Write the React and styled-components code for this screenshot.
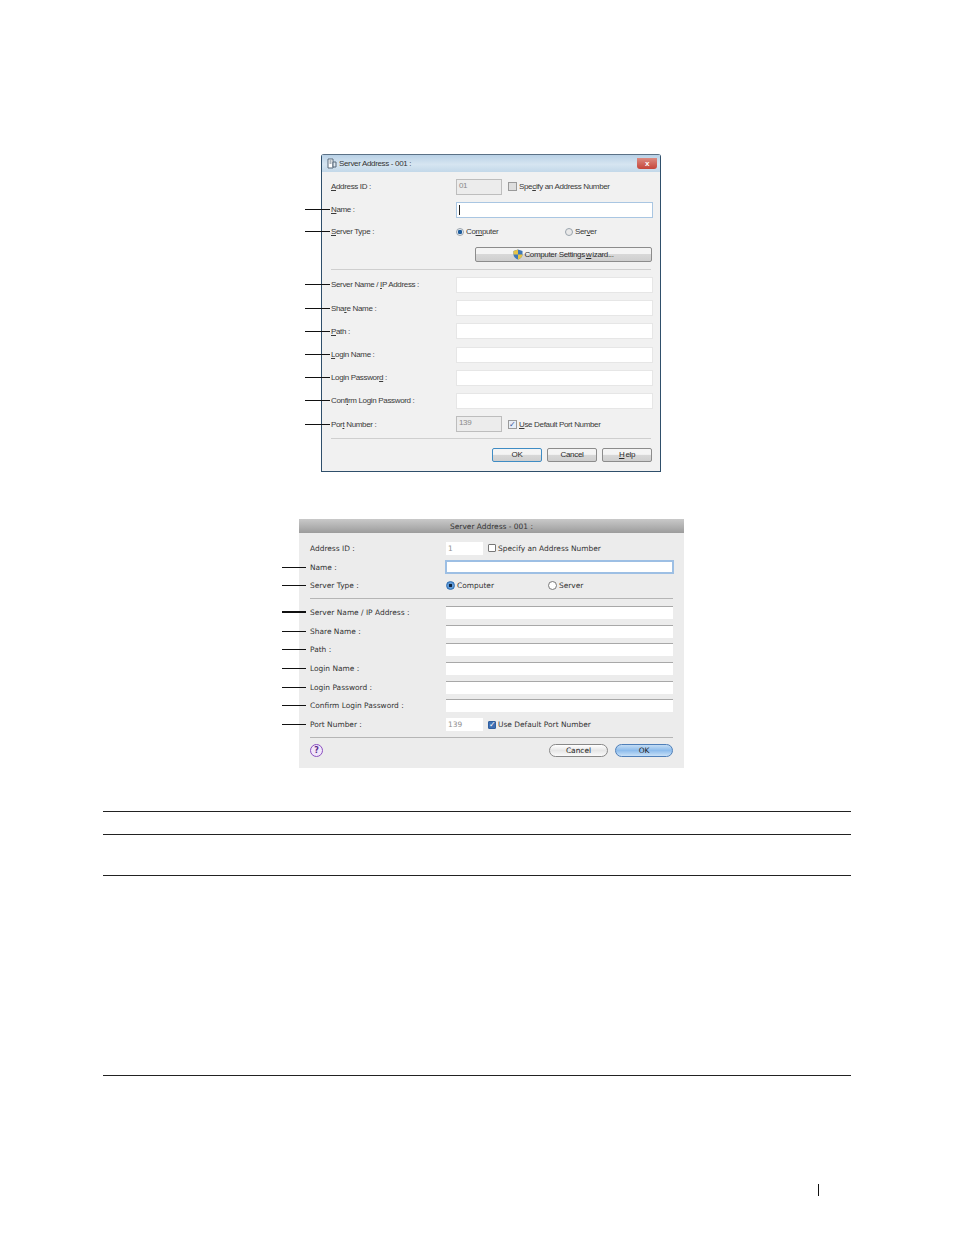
import React from 'react';
import styled, { createGlobalStyle } from 'styled-components';

const Global = createGlobalStyle`
  html, body { margin: 0; padding: 0; background: #fff; }
`;

const Page = styled.div`
  width: 954px;
  height: 1235px;
  padding-top: 154px;
  box-sizing: border-box;
  overflow: hidden;
  background: #fff;
`;

/* ---------- windows dialog ---------- */
const WinDialog = styled.section`
  width: 340px;
  height: 318px;
  margin-left: 321px;
  box-sizing: border-box;
  border: 1px solid #2f4f6b;
  border-top-color: #5b7186;
  border-radius: 3px 3px 0 0;
  background: #f1f1f1;
  font: 8px "Liberation Sans", sans-serif;
  letter-spacing: -0.34px;
  color: #3a3a3a;
  display: flex;
  flex-direction: column;
`;

const WinTitle = styled.header`
  height: 17px;
  flex: none;
  display: flex;
  align-items: center;
  gap: 2px;
  padding: 0 3px 0 5px;
  background: linear-gradient(#b9d1e6, #d6e5f1 55%, #c3d8e9);
  color: #333;
`;

const WinClose = styled.span`
  margin-left: auto;
  width: 20px;
  height: 11px;
  border-radius: 0 0 3px 3px;
  background: linear-gradient(#dc8a80, #c5453a);
  color: #fff;
  font-size: 8px;
  font-weight: bold;
  display: flex;
  align-items: center;
  justify-content: center;
`;

const WinBody = styled.div`
  flex: 1;
  padding: 3px 8px 0 9px;
  display: flex;
  flex-direction: column;
`;

const WinRow = styled.div`
  height: ${p => p.$h || 23.2}px;
  flex: none;
  display: flex;
  align-items: center;
`;

const WinLabel = styled.span`
  position: relative;
  width: 125px;
  flex: none;
  &::before {
    content: ${p => (p.$lead ? '""' : 'none')};
    position: absolute;
    left: -26px;
    top: 4px;
    width: 25px;
    height: 1px;
    background: #111;
  }
`;

const WinInput = styled.div`
  box-sizing: border-box;
  width: ${p => p.$w || 197}px;
  height: 16px;
  flex: none;
  padding-left: 2px;
  line-height: 11px;
  color: #8a8a8a;
  background: ${p => (p.$off ? '#ececec' : '#fff')};
  border: 1px solid ${p => (p.$off ? '#bdbdbd' : p.$focus ? '#a9c6e2' : '#e6e6e6')};
`;

const Caret = styled.span`
  display: block;
  width: 1px;
  height: 10px;
  margin-top: 2px;
  background: #222;
`;

const WinCheck = styled.span`
  box-sizing: border-box;
  width: 9px;
  height: 9px;
  flex: none;
  margin: 0 2px 0 6px;
  border: 1px solid #9a9a9a;
  background: ${p => (p.$on ? '#e8eef6' : '#dedede')};
  color: #39559c;
  font-size: 8px;
  line-height: 7px;
  text-align: center;
`;

const WinRadio = styled.span`
  box-sizing: border-box;
  width: 8px;
  height: 8px;
  flex: none;
  margin-right: 2px;
  border-radius: 50%;
  border: 1px solid #9aa4ad;
  background: ${p => (p.$on ? 'radial-gradient(circle, #1d5c9c 0 2px, #e8eef4 2.4px)' : '#e9e9e9')};
`;

const RadioCell = styled.span`
  width: ${p => p.$w}px;
  flex: none;
  display: flex;
  align-items: center;
`;

const WizardRow = styled.div`
  height: 27px;
  flex: none;
  display: flex;
  justify-content: flex-end;
  align-items: center;
  padding-bottom: 2px;
  box-sizing: border-box;
`;

const WinButton = styled.button`
  box-sizing: border-box;
  width: ${p => p.$w || 50}px;
  height: ${p => p.$h || 14}px;
  padding: 0;
  display: flex;
  align-items: center;
  justify-content: center;
  gap: 1px;
  font: inherit;
  letter-spacing: inherit;
  color: #2c2c2c;
  border-radius: 2px;
  border: 1px solid ${p => (p.$main ? '#3f8cc4' : '#8c8c8c')};
  background: linear-gradient(#f4f4f4 45%, #d8d8d8 50%, #cfcfcf);
`;

const WinRule = styled.hr`
  width: 320px;
  height: 1px;
  flex: none;
  margin: ${p => p.$m};
  border: 0;
  background: #cfcfcf;
`;

const WinFooter = styled.div`
  display: flex;
  justify-content: flex-end;
  gap: 5px;
  margin-top: 9px;
`;

/* ---------- mac dialog ---------- */
const MacDialog = styled.section`
  width: 385px;
  height: 249px;
  margin: 47px 0 0 299px;
  background: #ececec;
  font: 7.45px "DejaVu Sans", sans-serif;
  color: #333;
  display: flex;
  flex-direction: column;
`;

const MacTitle = styled.header`
  height: 14px;
  flex: none;
  background: linear-gradient(#c9c9c9, #9c9c9c);
  display: flex;
  align-items: center;
  justify-content: center;
`;

const MacBody = styled.div`
  flex: 1;
  padding: 6px 11px 0 11px;
  display: flex;
  flex-direction: column;
`;

const MacRow = styled.div`
  height: 18.7px;
  flex: none;
  display: flex;
  align-items: center;
`;

const MacLabel = styled.span`
  position: relative;
  width: 136px;
  flex: none;
  &::before {
    content: ${p => (p.$lead ? '""' : 'none')};
    position: absolute;
    left: -28px;
    top: ${p => (p.$bold ? 3 : 4)}px;
    width: 24px;
    height: ${p => (p.$bold ? 2 : 1)}px;
    background: #111;
  }
`;

const MacInput = styled.div`
  box-sizing: border-box;
  width: ${p => p.$w || 227}px;
  height: ${p => (p.$focus ? 12 : 13)}px;
  flex: none;
  padding-left: 2px;
  line-height: 12px;
  color: #8f8f8f;
  background: #fff;
  border-top: 1px solid ${p => (p.$plain ? '#fff' : '#a8a8a8')};
  ${p => p.$focus && 'outline: 2px solid #9dbfe4; outline-offset: -1px; border: 1px solid #6f9bcd;'}
`;

const MacCheck = styled.span`
  box-sizing: border-box;
  width: 8px;
  height: 8px;
  flex: none;
  margin: 0 2px 0 5px;
  border-radius: 1px;
  border: 1px solid ${p => (p.$on ? '#2f5f9f' : '#777')};
  background: ${p => (p.$on ? '#3f6fb3' : '#fff')};
  color: #fff;
  font-size: 8px;
  line-height: 6px;
  text-align: center;
`;

const MacRadio = styled.span`
  box-sizing: border-box;
  width: 9px;
  height: 9px;
  flex: none;
  margin-right: 2px;
  border-radius: 50%;
  border: 1px solid ${p => (p.$on ? '#2a6bb0' : '#777')};
  background: ${p => (p.$on ? 'radial-gradient(circle, #10253f 0 1.4px, #5f9ad8 1.9px)' : '#fff')};
`;

const MacRule = styled.hr`
  width: 363px;
  height: 1px;
  flex: none;
  margin: ${p => p.$m};
  border: 0;
  background: #b5b5b5;
`;

const MacFooter = styled.div`
  display: flex;
  align-items: center;
  margin-top: 6px;
`;

const MacButton = styled.button`
  box-sizing: border-box;
  width: ${p => p.$w}px;
  height: 13px;
  margin-left: ${p => p.$ml || 0}px;
  padding: 0;
  font: inherit;
  color: #222;
  border-radius: 7px;
  border: 1px solid ${p => (p.$main ? '#4f7fb8' : '#888')};
  background: ${p => (p.$main ? 'linear-gradient(#c3dcf4, #8dbcec 50%, #c8e0f7)' : 'linear-gradient(#fff, #e6e6e6 50%, #fafafa)')};
`;

const HelpDot = styled.span`
  box-sizing: border-box;
  width: 13px;
  height: 13px;
  border-radius: 50%;
  border: 1px solid #8a4fc0;
  background: #f1e6fa;
  color: #5a2d8c;
  font-size: 8px;
  font-weight: bold;
  line-height: 11px;
  text-align: center;
`;

/* ---------- table + footer ---------- */
const Table = styled.div`
  width: 748px;
  margin: 43px 0 0 103px;
  border-bottom: 1px solid #222;
`;

const TableRow = styled.div`
  height: ${p => p.$h}px;
  box-sizing: border-box;
  border-top: 1px solid #222;
`;

const PageMark = styled.div`
  width: 1px;
  height: 12px;
  margin: 108px 0 0 818px;
  background: #111;
`;

const AppIcon = () => (
  <svg width="10" height="11" viewBox="0 0 10 11">
    <path d="M1 1h5v9H1z" fill="#fff" stroke="#56697a" strokeWidth="1" />
    <path d="M6 4h3v5H6z" fill="#dfe8f0" stroke="#56697a" strokeWidth="1" />
    <path d="M2.5 3h2M2.5 5h2" stroke="#56697a" strokeWidth="1" />
  </svg>
);

const Shield = () => (
  <svg width="10" height="11" viewBox="0 0 10 11">
    <path d="M5 0.5 9.5 2v3.5C9.5 8 7.5 9.6 5 10.5 2.5 9.6.5 8 .5 5.5V2z" fill="#3f78b8" />
    <path d="M5 .5V5.5H.5V2zM5 5.5H9.5C9.5 8 7.5 9.6 5 10.5z" fill="#e6c347" />
  </svg>
);

const winFields = [
  <>Server Name / <u>I</u>P Address :</>,
  <>Sha<u>r</u>e Name :</>,
  <><u>P</u>ath :</>,
  <><u>L</u>ogin Name :</>,
  <>Login Passwor<u>d</u> :</>,
  <>Conf<u>i</u>rm Login Password :</>,
];

const macFields = ['Share Name :', 'Path :', 'Login Name :', 'Login Password :', 'Confirm Login Password :'];

const App = () => {
  return (
    <Page>
      <Global />
      <WinDialog>
        <WinTitle>
          <AppIcon />
          Server Address - 001 :
          <WinClose>x</WinClose>
        </WinTitle>
        <WinBody>
          <WinRow>
            <WinLabel><u>A</u>ddress ID :</WinLabel>
            <WinInput $off $w={46}>01</WinInput>
            <WinCheck />
            <span>Spe<u>c</u>ify an Address Number</span>
          </WinRow>
          <WinRow>
            <WinLabel $lead><u>N</u>ame :</WinLabel>
            <WinInput $focus><Caret /></WinInput>
          </WinRow>
          <WinRow $h={21}>
            <WinLabel $lead><u>S</u>erver Type :</WinLabel>
            <RadioCell $w={109}><WinRadio $on />Co<u>m</u>puter</RadioCell>
            <RadioCell $w={60}><WinRadio />Ser<u>v</u>er</RadioCell>
          </WinRow>
          <WizardRow>
            <WinButton $w={177} $h={15}><Shield />Computer Settings <u>w</u>izard...</WinButton>
          </WizardRow>
          <WinRule $m="0 0 3px" />
          {winFields.map((label, i) => (
            <WinRow key={i}>
              <WinLabel $lead>{label}</WinLabel>
              <WinInput />
            </WinRow>
          ))}
          <WinRow>
            <WinLabel $lead>Por<u>t</u> Number :</WinLabel>
            <WinInput $off $w={46}>139</WinInput>
            <WinCheck $on>✓</WinCheck>
            <span><u>U</u>se Default Port Number</span>
          </WinRow>
          <WinRule $m="2px 0 0" />
          <WinFooter>
            <WinButton $main>OK</WinButton>
            <WinButton>Cancel</WinButton>
            <WinButton><u>H</u>elp</WinButton>
          </WinFooter>
        </WinBody>
      </WinDialog>

      <MacDialog>
        <MacTitle>Server Address - 001 :</MacTitle>
        <MacBody>
          <MacRow>
            <MacLabel>Address ID :</MacLabel>
            <MacInput $plain $w={37}>1</MacInput>
            <MacCheck />
            Specify an Address Number
          </MacRow>
          <MacRow>
            <MacLabel $lead>Name :</MacLabel>
            <MacInput $focus />
          </MacRow>
          <MacRow>
            <MacLabel $lead>Server Type :</MacLabel>
            <RadioCell $w={102}><MacRadio $on />Computer</RadioCell>
            <RadioCell $w={60}><MacRadio />Server</RadioCell>
          </MacRow>
          <MacRule $m="3px 0 4px" />
          <MacRow>
            <MacLabel $lead $bold>Server Name / IP Address :</MacLabel>
            <MacInput />
          </MacRow>
          {macFields.map(label => (
            <MacRow key={label}>
              <MacLabel $lead>{label}</MacLabel>
              <MacInput />
            </MacRow>
          ))}
          <MacRow>
            <MacLabel $lead>Port Number :</MacLabel>
            <MacInput $plain $w={37}>139</MacInput>
            <MacCheck $on>✓</MacCheck>
            Use Default Port Number
          </MacRow>
          <MacRule $m="3px 0 0" />
          <MacFooter>
            <HelpDot>?</HelpDot>
            <MacButton $w={59} $ml={226}>Cancel</MacButton>
            <MacButton $w={58} $ml={7} $main>OK</MacButton>
          </MacFooter>
        </MacBody>
      </MacDialog>

      <Table>
        <TableRow $h={23} />
        <TableRow $h={41} />
        <TableRow $h={200} />
      </Table>
      <PageMark />
    </Page>
  );
};

export default App;
